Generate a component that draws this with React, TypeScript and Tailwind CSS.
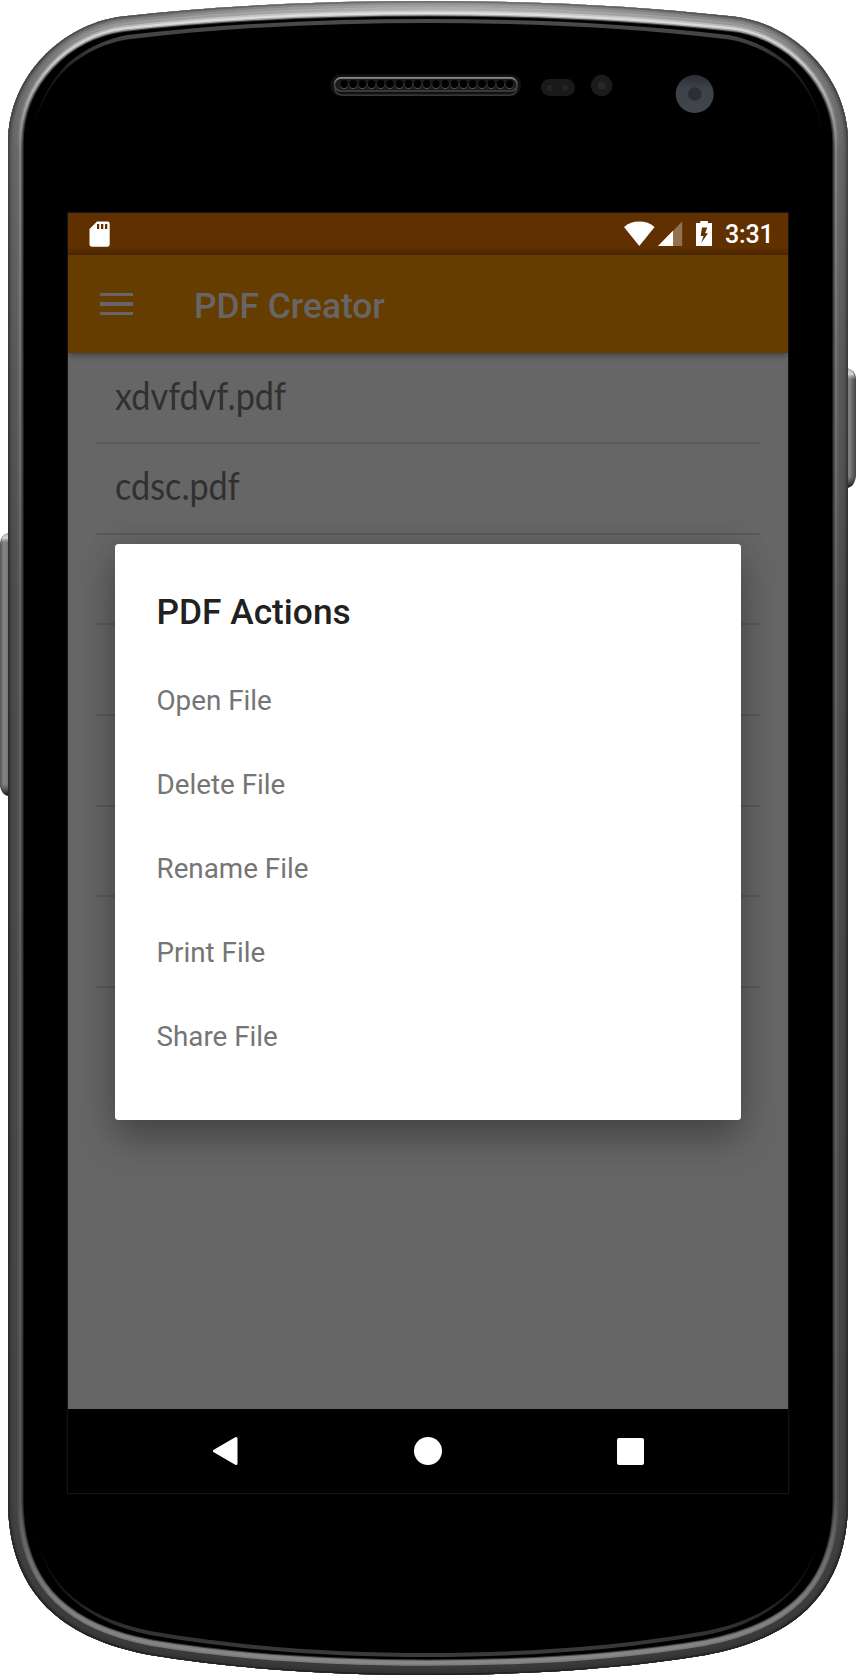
import React from "react";

const OUTLINE =
  "M8 143 C8 76 62 24 122 16.5 C225 5 325 1 428 1 C531 1 631 5 734 16.5 C794 24 848 76 848 143 V1500 C848 1600 786 1640 706 1655 C616 1670 516 1675 428 1675 C340 1675 240 1670 150 1655 C70 1640 8 1600 8 1500 Z";

const STOPS = [0, 16, 60, 150, 600, 1500, 1600, 1675];

const RIM: { depth: number; colors: string[] }[] = [
  { depth: 15.6, colors: ["#555", "#444", "#333", "#303030", "#2a2a2a", "#222", "#333", "#444"] },
  { depth: 14.6, colors: ["#ccc", "#aaa", "#888", "#505050", "#444", "#444", "#6c6c6c", "#888"] },
  { depth: 13.2, colors: ["#e8e8e8", "#ddd", "#ccc", "#808080", "#606060", "#585858", "#808080", "#8a8a8a"] },
  { depth: 11, colors: ["#ccc", "#c4c4c4", "#999", "#6c6c6c", "#565656", "#4c4c4c", "#707070", "#808080"] },
  { depth: 9.2, colors: ["#bababa", "#a0a0a0", "#7a7a7a", "#666", "#4c4c4c", "#444", "#3c3c3c", "#3a3a3a"] },
  { depth: 6, colors: ["#acacac", "#8a8a8a", "#707070", "#626262", "#4a4a4a", "#404040", "#3c3c3c", "#363636"] },
  { depth: 3.5, colors: ["#989898", "#707070", "#5c5c5c", "#555", "#404040", "#3a3a3a", "#353535", "#333"] },
  { depth: 1.5, colors: ["#707070", "#505050", "#444", "#444", "#2c2c2c", "#2a2a2a", "#222", "#222"] },
];

const HOLES = Array.from({ length: 19 }, (_, i) => 344 + i * 9.2);

function PhoneShell() {
  return (
    <svg className="absolute inset-0" width="856" height="1676" viewBox="0 0 856 1676" aria-hidden="true">
      <defs>
        <clipPath id="body">
          <path d={OUTLINE} />
        </clipPath>
        {RIM.map((r, i) => (
          <linearGradient key={i} id={`rim${i}`} gradientUnits="userSpaceOnUse" x1="0" y1="0" x2="0" y2="1675">
            {r.colors.map((c, j) => (
              <stop key={j} offset={STOPS[j] / 1675} stopColor={c} />
            ))}
          </linearGradient>
        ))}
        <linearGradient id="keyL" x1="0" x2="1" y1="0" y2="0">
          <stop offset="0" stopColor="#555" />
          <stop offset="0.4" stopColor="#868686" />
          <stop offset="0.8" stopColor="#757575" />
          <stop offset="1" stopColor="#555" />
        </linearGradient>
        <linearGradient id="keyR" x1="1" x2="0" y1="0" y2="0">
          <stop offset="0" stopColor="#444" />
          <stop offset="0.4" stopColor="#6a6a6a" />
          <stop offset="0.7" stopColor="#868686" />
          <stop offset="1" stopColor="#555" />
        </linearGradient>
        <linearGradient id="capTop" x1="0" x2="0" y1="0" y2="1">
          <stop offset="0" stopColor="#aaa" />
          <stop offset="0.5" stopColor="#d8d8d8" />
          <stop offset="1" stopColor="#999" stopOpacity="0" />
        </linearGradient>
        <linearGradient id="capBottom" x1="0" x2="0" y1="0" y2="1">
          <stop offset="0" stopColor="#333" stopOpacity="0" />
          <stop offset="1" stopColor="#111" />
        </linearGradient>
        <linearGradient id="shineTop" gradientUnits="userSpaceOnUse" x1="0" y1="18" x2="0" y2="142">
          <stop offset="0" stopColor="#4c4c4c" />
          <stop offset="0.2" stopColor="#404040" />
          <stop offset="0.45" stopColor="#1c1c1c" />
          <stop offset="1" stopColor="#000" />
        </linearGradient>
        <linearGradient id="shineBottom" gradientUnits="userSpaceOnUse" x1="0" y1="1505" x2="0" y2="1657">
          <stop offset="0" stopColor="#000" />
          <stop offset="0.55" stopColor="#161616" />
          <stop offset="0.8" stopColor="#303030" />
          <stop offset="1" stopColor="#3c3c3c" />
        </linearGradient>
        <linearGradient id="slot" x1="0" x2="0" y1="0" y2="1">
          <stop offset="0" stopColor="#8c8c8c" />
          <stop offset="0.5" stopColor="#444" />
          <stop offset="1" stopColor="#444" />
        </linearGradient>
        <linearGradient id="lens" x1="0" x2="0" y1="0" y2="1">
          <stop offset="0" stopColor="#2b2e34" />
          <stop offset="0.35" stopColor="#3d4148" />
          <stop offset="1" stopColor="#41454c" />
        </linearGradient>
      </defs>

      <path d="M10 533 C3 533 0 538 0 545 V786 C1 792 4 796 10 796 Z" fill="url(#keyL)" />
      <path d="M10 533 C4 533 1 537 1 543 H10 Z" fill="url(#capTop)" />
      <path d="M0 784 C1 792 4 796 10 796 V784 Z" fill="url(#capBottom)" />
      <path d="M846 368 C852 369 856 372 856 380 V476 C855 483 852 488 846 488 Z" fill="url(#keyR)" />
      <path d="M846 368 C852 369 855 373 855 380 H846 Z" fill="url(#capTop)" />
      <path d="M856 476 C855 483 852 488 846 488 V476 Z" fill="url(#capBottom)" />

      <path d={OUTLINE} fill="#000" />
      <g clipPath="url(#body)">
        {RIM.map((r, i) => (
          <path key={i} d={OUTLINE} fill="none" stroke={`url(#rim${i})`} strokeWidth={r.depth * 2} />
        ))}
      </g>

      <path
        d="M31 143 C35 110 47 85 67 64 C86 48 106 39 127 35 C230 23 330 19 428 19 C526 19 626 23 729 35 C750 39 770 48 789 64 C809 85 821 110 825 143 C820 110 807 86 789 68 C770 52 750 43 729 39.5 C626 27 526 23 428 23 C330 23 230 27 127 39.5 C106 43 86 52 67 68 C49 86 36 110 31 143 Z"
        fill="url(#shineTop)"
      />
      <path
        d="M31 1505 C34 1540 46 1570 65 1590 C86 1611 115 1624 150 1631 C240 1647 340 1653 428 1653 C516 1653 616 1647 706 1631 C741 1624 770 1611 791 1590 C810 1570 822 1540 825 1505 C822 1541 810 1573 791 1593 C770 1614 741 1628 706 1635 C616 1651 516 1657 428 1657 C340 1657 240 1651 150 1635 C115 1628 86 1614 65 1593 C46 1573 34 1541 31 1505 Z"
        fill="url(#shineBottom)"
      />

      <rect x="330.5" y="74.5" width="190.5" height="21.5" rx="10" fill="#121212" />
      <path d="M334.5 85 C334.5 92 337 95.2 342 95.2 H510 C515 95.2 517 92 517 85" fill="none" stroke="#444" strokeWidth="1.2" />
      <rect x="334.5" y="77.8" width="182.5" height="13.2" rx="6.6" fill="#1b1b1b" stroke="url(#slot)" strokeWidth="1.7" />
      {HOLES.map((x) => (
        <g key={x}>
          <circle cx={x} cy="84.8" r="4.2" fill="#555" />
          <circle cx={x} cy="84" r="3.9" fill="#000" />
        </g>
      ))}
      <rect x="541" y="79" width="34" height="17" rx="8.5" fill="#1a1a1a" />
      <circle cx="550" cy="87.7" r="3" fill="#252525" />
      <circle cx="565.3" cy="87.7" r="3" fill="#252525" />
      <circle cx="601.7" cy="85.5" r="10.7" fill="#1b1b1b" />
      <circle cx="601.7" cy="85.5" r="4" fill="#272727" />
      <circle cx="694.7" cy="94" r="19" fill="url(#lens)" />
      <circle cx="694.7" cy="94" r="6.8" fill="#2c2e32" />
    </svg>
  );
}

function StatusBar() {
  return (
    <div className="flex h-[42px] shrink-0 items-start bg-[linear-gradient(#613000_0,#613000_34px,#4e2700_42px)] pl-[21px] pr-[17px] pt-2 text-white">
      <svg width="21" height="26" viewBox="0 0 21 26" aria-hidden="true">
        <path
          d="M8 .5 H18.6 Q20.7 .5 20.7 2.5 V23.6 Q20.7 25.7 18.6 25.7 H2.6 Q.5 25.7 .5 23.6 V8 Z M8 3 V8 H10.2 V3 Z M12 3 V8 H14.3 V3 Z M16 3 V8 H18.3 V3 Z"
          fill="#fff"
          fillRule="evenodd"
        />
      </svg>
      <div className="ml-auto flex items-start">
        <svg width="32" height="26" viewBox="0 0 32 26" aria-hidden="true">
          <path d="M0 6 C8.4-1.3 22.2-1.3 30.6 6 L15.3 25 Z" fill="#fff" />
        </svg>
        <svg className="ml-[2px]" width="25" height="26" viewBox="0 0 25 26" aria-hidden="true">
          <path d="M24.2 .6 V25 H0 Z" fill="#fff" fillOpacity=".32" />
          <path d="M15 9.8 V25 H0 Z" fill="#fff" />
        </svg>
        <svg className="ml-[13px]" width="17" height="26" viewBox="0 0 17 26" aria-hidden="true">
          <path
            d="M4.3 0 H11.9 V2 H16 V25 H0 V2 H4.3 Z M6 6.5 L4.7 15 H7.5 L5.2 22 L12 12.3 H9 L11.3 6.5 Z"
            fill="#fff"
            fillRule="evenodd"
          />
        </svg>
        <span className="ml-[12px] w-[46px] whitespace-nowrap text-[25px] font-medium leading-[28px] tracking-[-0.2px]">
          3:31
        </span>
      </div>
    </div>
  );
}

const FILES = ["xdvfdvf.pdf", "cdsc.pdf", "", "", "", "", ""];
const ACTIONS = ["Open File", "Delete File", "Rename File", "Print File", "Share File"];

export default function App() {
  return (
    <div className="relative h-[1676px] w-[856px] overflow-hidden bg-white px-[68px] pt-[213px] font-['Roboto',sans-serif]">
      <PhoneShell />
      <main className="relative flex h-[1280px] w-[720px] flex-col bg-[#666] shadow-[0_0_1px_1px_#141414]">
        <StatusBar />
        <header className="relative flex h-[98px] shrink-0 items-center bg-[#663d00] shadow-[0_2px_7px_rgba(0,0,0,0.4)]">
          <div className="ml-8 flex w-[33px] flex-col gap-[6px]">
            <span className="h-[3.5px] bg-[#666]" />
            <span className="h-[3.5px] bg-[#666]" />
            <span className="h-[3.5px] bg-[#666]" />
          </div>
          <h1 className="ml-[61px] pt-[4px] text-[35.3px] font-medium leading-[42px] text-[#666]">PDF Creator</h1>
        </header>
        <ul className="mx-7 flex-1 pt-[0.5px]">
          {FILES.map((name, i) => (
            <li key={i} className="flex h-[90.67px] items-center border-b-2 border-[#5a5a5a] pl-[19px]">
              <span className="origin-left scale-x-[0.9] pb-[6px] font-['Lato',sans-serif] text-[38px] leading-[46px] text-[#303030]">
                {name}
              </span>
            </li>
          ))}
        </ul>
        <nav className="flex h-[84px] shrink-0 items-center bg-black pl-[145px] pr-36">
          <svg width="26" height="30" viewBox="0 0 26 30" aria-hidden="true">
            <path d="M1.5 15 L23 2.5 V27.5 Z" fill="#fff" stroke="#fff" strokeWidth="3" strokeLinejoin="round" />
          </svg>
          <span className="ml-[175px] size-7 rounded-full bg-white" />
          <span className="ml-auto size-[27px] rounded-[2px] bg-white" />
        </nav>
        <section
          role="dialog"
          className="absolute left-[46.5px] top-[330.5px] h-[576px] w-[626.5px] rounded-[3.5px] bg-white pl-[42px] pt-[47px] shadow-[0_20px_36px_rgba(0,0,0,0.28),0_0_32px_rgba(0,0,0,0.12)]"
        >
          <h2 className="text-[35.3px] font-medium leading-[42px] text-[#212121]">PDF Actions</h2>
          <ul className="mt-[26px]">
            {ACTIONS.map((a) => (
              <li key={a} className="flex h-[84px] items-center text-[27.8px] text-[#757575]">
                {a}
              </li>
            ))}
          </ul>
        </section>
      </main>
    </div>
  );
}
